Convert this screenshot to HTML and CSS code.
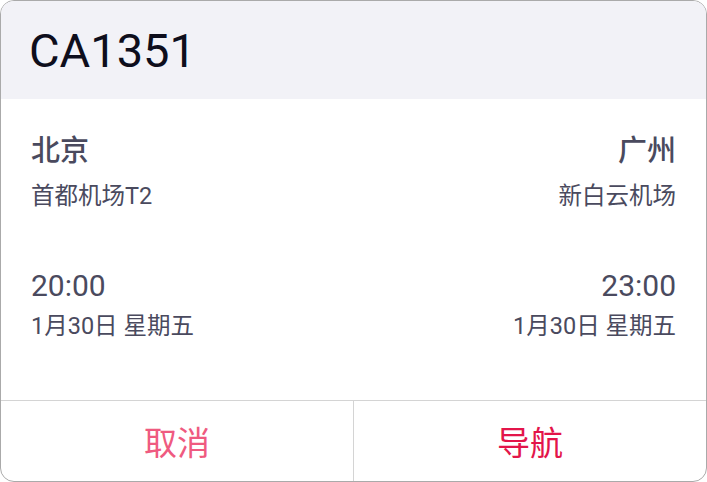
FILE: index.html
```html
<!DOCTYPE html>
<html lang="zh">
<head>
<meta charset="utf-8">
<link rel="stylesheet" href="styles.css">
</head>
<body>
<div class="card">
  <div class="header">CA1351</div>
  <div class="content">
    <div class="row stations">
      <div class="side">
        <div class="city">北京</div>
        <div class="airport">首都机场T2</div>
      </div>
      <div class="side right">
        <div class="city">广州</div>
        <div class="airport">新白云机场</div>
      </div>
    </div>
    <div class="row times">
      <div class="side">
        <div class="time">20:00</div>
        <div class="date">1月30日 星期五</div>
      </div>
      <div class="side right">
        <div class="time">23:00</div>
        <div class="date">1月30日 星期五</div>
      </div>
    </div>
  </div>
  <div class="footer">
    <div class="btn cancel">取消</div>
    <div class="btn nav">导航</div>
  </div>
</div>
</body>
</html>
```
FILE: styles.css
```css
html, body {
  margin: 0;
  padding: 0;
  background: #ffffff;
}
body {
  font-family: Roboto, "Noto Sans CJK SC", sans-serif;
}
.card {
  width: 707px;
  height: 482px;
  box-sizing: border-box;
  border: 1px solid #aaaaaa;
  border-radius: 14px;
  overflow: hidden;
  display: flex;
  flex-direction: column;
  background: #ffffff;
}
.header {
  height: 98px;
  flex: none;
  background: #f2f2f7;
  display: flex;
  align-items: center;
  padding-left: 28px;
  font-size: 47px;
  color: #0e0e1c;
  line-height: 1;
}
.content {
  height: 301px;
  flex: none;
  padding: 35px 30px 0 30px;
  box-sizing: border-box;
  color: #4a4a5e;
}
.row {
  display: flex;
  justify-content: space-between;
}
.side {
  display: flex;
  flex-direction: column;
}
.side.right {
  align-items: flex-end;
}
.city {
  font-size: 29px;
  line-height: 34px;
  font-weight: 500;
}
.airport {
  font-size: 23.5px;
  line-height: 28px;
  margin-top: 14px;
}
.times {
  margin-top: 59px;
}
.time {
  font-size: 30px;
  line-height: 34px;
}
.date {
  font-size: 23.5px;
  line-height: 28px;
  margin-top: 9px;
}
.footer {
  flex: 1;
  display: flex;
  border-top: 1px solid #d4d4d4;
}
.btn {
  flex: 1;
  display: flex;
  align-items: center;
  justify-content: center;
  font-size: 33px;
}
.cancel {
  color: #ef5a80;
  border-right: 1px solid #d4d4d4;
}
.nav {
  color: #e3154a;
}
```
